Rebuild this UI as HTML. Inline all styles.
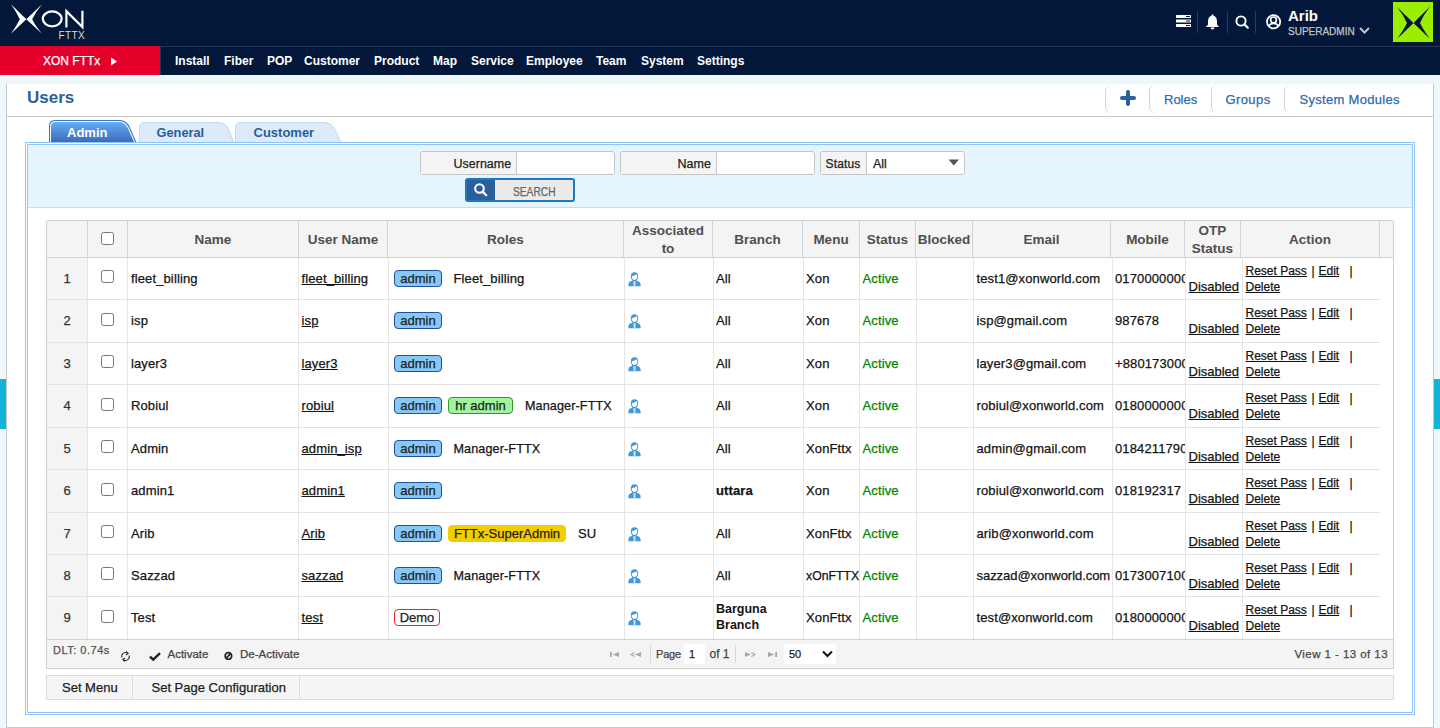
<!DOCTYPE html><html><head><meta charset="utf-8"><style>
html,body{margin:0;padding:0;}
body{width:1440px;height:728px;overflow:hidden;position:relative;background:#eef7f9;font-family:"Liberation Sans", sans-serif;}
.a{position:absolute;box-sizing:border-box;}
.t{position:absolute;white-space:nowrap;font-family:"Liberation Sans", sans-serif;}
.u{text-decoration:underline;}
svg{position:absolute;overflow:visible;}
</style></head><body>

<div class="a" style="left:0px;top:0px;width:1440px;height:75px;background:#021739"></div>
<div class="a" style="left:0px;top:46px;width:1440px;height:1px;background:#26364f"></div>
<div class="a" style="left:0px;top:46px;width:160px;height:29px;background:#e4002b"></div>
<div class="a" style="left:160px;top:46px;width:1px;height:29px;background:#26364f"></div>
<svg style="left:0;top:0" width="100" height="46" viewBox="0 0 100 46">
<path d="M11 4.2 L26.3 19.3 L11 33.8 Q16.5 26 19.8 19.3 Q16.5 12 11 4.2 Z" fill="#fff"/>
<path d="M42 4.2 L26.3 19.3 L42 33.8 Q35.5 26 32.2 19.3 Q35.5 12 42 4.2 Z" fill="#fff"/>
<ellipse cx="52.2" cy="18.85" rx="9.4" ry="7.5" fill="none" stroke="#fff" stroke-width="2.3"/>
<path d="M66.4 27.5 V11.2 L82.4 27 V10.8" fill="none" stroke="#fff" stroke-width="2.2" stroke-linejoin="miter"/>
</svg>
<div class="t " style="left:58.5px;top:31.14px;font-size:10px;line-height:10px;font-weight:400;color:#dcdcdc;-webkit-text-stroke:0.25px currentColor;letter-spacing:0.4px;-webkit-text-stroke:0">FTTX</div>
<div class="t " style="left:43px;top:54.84px;font-size:12px;line-height:12px;font-weight:400;color:#fff;-webkit-text-stroke:0.25px currentColor;">XON FTTx</div>
<svg style="left:110px;top:57px" width="8" height="9"><path d="M1 0.5 L7 4.5 L1 8.5 Z" fill="#fff"/></svg>
<div class="t " style="left:175px;top:54.84px;font-size:12px;line-height:12px;font-weight:700;color:#fff;">Install</div>
<div class="t " style="left:224px;top:54.84px;font-size:12px;line-height:12px;font-weight:700;color:#fff;">Fiber</div>
<div class="t " style="left:267px;top:54.84px;font-size:12px;line-height:12px;font-weight:700;color:#fff;">POP</div>
<div class="t " style="left:304px;top:54.84px;font-size:12px;line-height:12px;font-weight:700;color:#fff;">Customer</div>
<div class="t " style="left:374px;top:54.84px;font-size:12px;line-height:12px;font-weight:700;color:#fff;">Product</div>
<div class="t " style="left:433px;top:54.84px;font-size:12px;line-height:12px;font-weight:700;color:#fff;">Map</div>
<div class="t " style="left:471px;top:54.84px;font-size:12px;line-height:12px;font-weight:700;color:#fff;">Service</div>
<div class="t " style="left:526px;top:54.84px;font-size:12px;line-height:12px;font-weight:700;color:#fff;">Employee</div>
<div class="t " style="left:596px;top:54.84px;font-size:12px;line-height:12px;font-weight:700;color:#fff;">Team</div>
<div class="t " style="left:641px;top:54.84px;font-size:12px;line-height:12px;font-weight:700;color:#fff;">System</div>
<div class="t " style="left:697px;top:54.84px;font-size:12px;line-height:12px;font-weight:700;color:#fff;">Settings</div>
<svg style="left:1176px;top:14px" width="16" height="14" viewBox="0 0 16 14">
<rect x="0" y="1" width="15" height="3" rx="0.5" fill="#fff"/><rect x="0" y="5.5" width="15" height="3" rx="0.5" fill="#fff"/><rect x="0" y="10" width="15" height="3" rx="0.5" fill="#fff"/>
<rect x="10" y="2" width="4" height="1" fill="#021739"/><rect x="10" y="6.5" width="4" height="1" fill="#021739"/><rect x="10" y="11" width="4" height="1" fill="#021739"/>
</svg>
<div class="a" style="left:1197px;top:11px;width:1px;height:22px;background:#2c3b55"></div>
<svg style="left:1205px;top:14px" width="15" height="16" viewBox="0 0 15 16">
<path d="M7.5 0.5 C8.3 0.5 8.5 1.2 8.5 1.8 C11 2.5 12 4.5 12 7.5 L12 10.5 L14 13 L1 13 L3 10.5 L3 7.5 C3 4.5 4 2.5 6.5 1.8 C6.5 1.2 6.7 0.5 7.5 0.5 Z" fill="#fff"/>
<path d="M5.5 13.5 A2 2 0 0 0 9.5 13.5 Z" fill="#fff"/>
</svg>
<div class="a" style="left:1227px;top:11px;width:1px;height:22px;background:#2c3b55"></div>
<svg style="left:1234.6px;top:15px" width="15" height="15" viewBox="0 0 15 15">
<circle cx="6" cy="6" r="4.6" fill="none" stroke="#fff" stroke-width="1.9"/>
<path d="M9.3 9.3 L12.8 12.8" stroke="#fff" stroke-width="2.1" stroke-linecap="round"/>
</svg>
<div class="a" style="left:1255px;top:11px;width:1px;height:22px;background:#2c3b55"></div>
<svg style="left:1265px;top:14px" width="17" height="17" viewBox="0 0 17 17">
<circle cx="8.6" cy="7.8" r="6.6" fill="none" stroke="#fff" stroke-width="1.8"/>
<circle cx="8.5" cy="5.9" r="2.9" fill="none" stroke="#fff" stroke-width="1.7"/>
<path d="M4 12.4 C4.6 10.2 6.3 9.3 8.6 9.3 C10.9 9.3 12.6 10.2 13.2 12.4" fill="none" stroke="#fff" stroke-width="1.7"/>
</svg>
<div class="t " style="left:1288px;top:8.30px;font-size:15px;line-height:15px;font-weight:700;color:#fff;">Arib</div>
<div class="t " style="left:1288px;top:26.54px;font-size:10px;line-height:10px;font-weight:400;color:#c4c4c4;-webkit-text-stroke:0.25px currentColor;">SUPERADMIN</div>
<svg style="left:1359px;top:27px" width="11" height="7" viewBox="0 0 11 7"><path d="M1 1 L5.5 5.5 L10 1" fill="none" stroke="#c4c4c4" stroke-width="2"/></svg>
<div class="a" style="left:1393px;top:2px;width:40px;height:40px;background:#9bee00"></div>
<svg style="left:1393px;top:2px" width="40" height="40" viewBox="0 0 40 40">
<path d="M4 5 L20.5 21 L4 37 Q10.5 28 14 21 Q10.5 13 4 5 Z M37 4.5 L20.5 21 L37 37 Q30.5 28 27 21 Q30.5 13 37 4.5 Z" fill="#021739"/>
</svg>
<div class="a" style="left:6px;top:84px;width:1428px;height:644px;background:#fff;border-left:1px solid #c8c8c8;border-right:1px solid #c8c8c8;border-bottom:1px solid #c8c8c8"></div>
<div class="t " style="left:27px;top:88.61px;font-size:17px;line-height:17px;font-weight:700;color:#2c5e99;">Users</div>
<div class="a" style="left:7px;top:116px;width:1426px;height:1px;background:#c8c8c8"></div>
<div class="a" style="left:1105px;top:85px;width:8px;height:28px;border-left:1px solid #d4d4d4;border-radius:6px 0 0 6px"></div>
<div class="a" style="left:1149px;top:85px;width:8px;height:28px;border-left:1px solid #d4d4d4;border-radius:6px 0 0 6px"></div>
<div class="a" style="left:1211px;top:85px;width:8px;height:28px;border-left:1px solid #d4d4d4;border-radius:6px 0 0 6px"></div>
<div class="a" style="left:1284px;top:85px;width:8px;height:28px;border-left:1px solid #d4d4d4;border-radius:6px 0 0 6px"></div>
<svg style="left:1120px;top:90px" width="16" height="16" viewBox="0 0 16 16"><path d="M8 2 V14 M2 8 H14" stroke="#2a5f9e" stroke-width="4" stroke-linecap="round"/></svg>
<div class="t " style="left:1164px;top:93.00px;font-size:13px;line-height:13px;font-weight:400;color:#2f6aa8;-webkit-text-stroke:0.25px currentColor;letter-spacing:0px">Roles</div>
<div class="t " style="left:1225.5px;top:93.00px;font-size:13px;line-height:13px;font-weight:400;color:#2f6aa8;-webkit-text-stroke:0.25px currentColor;letter-spacing:0.4px">Groups</div>
<div class="t " style="left:1299.5px;top:93.00px;font-size:13px;line-height:13px;font-weight:400;color:#2f6aa8;-webkit-text-stroke:0.25px currentColor;letter-spacing:0.3px">System Modules</div>
<svg style="left:0;top:0" width="400" height="150" viewBox="0 0 400 150">
<defs><linearGradient id="tg" x1="0" y1="0" x2="0" y2="1"><stop offset="0" stop-color="#62adf7"/><stop offset="1" stop-color="#3b68b6"/></linearGradient></defs>
<path d="M235.5 143 V128 Q235.5 122.5 241 122.5 H323 Q331.5 122.5 334.5 129 L341.5 143 Z" fill="#dceafa" stroke="#c3d9f2" stroke-width="1"/>
<path d="M139.5 143 V128 Q139.5 122.5 145 122.5 H217 Q225.5 122.5 228.5 129 L234 143 Z" fill="#dceafa" stroke="#c3d9f2" stroke-width="1"/>
<path d="M49 143 V126 Q49 120 55 120 H120 Q126.5 120 129.5 126.5 L136.8 143 Z" fill="#3b76c6"/>
<path d="M50 143 V126.5 Q50 121 55.5 121 H119.5 Q125.5 121 128.5 127 L135.6 143 Z" fill="#f4f9ff"/>
<path d="M51 143 V127 Q51 122 56 122 H119 Q124.5 122 127.5 127.5 L134.4 143 Z" fill="url(#tg)"/>
</svg>
<div class="t " style="left:67px;top:126.00px;font-size:13px;line-height:13px;font-weight:700;color:#fff;">Admin</div>
<div class="t " style="left:156.5px;top:126.66px;font-size:12.8px;line-height:12.8px;font-weight:700;color:#2a5d9a;">General</div>
<div class="t " style="left:253.5px;top:126.00px;font-size:13px;line-height:13px;font-weight:700;color:#2a5d9a;">Customer</div>
<div class="a" style="left:25px;top:142px;width:1390px;height:573px;border:3px double #8fc3f5;background:#fff"></div>
<div class="a" style="left:28px;top:145px;width:1384px;height:62px;background:#e6f5fd"></div>
<div class="a" style="left:28px;top:207px;width:1384px;height:1px;background:#d3dbe0"></div>
<div class="a" style="left:420px;top:151px;width:195px;height:24px;border:1px solid #c6c6c6;border-radius:3px;background:#fff"></div>
<div class="a" style="left:421px;top:152px;width:96px;height:22px;background:#f4f4f4;border-right:1px solid #c6c6c6;border-radius:2px 0 0 2px"></div>
<div class="t " style="left:453.5px;top:158.22px;font-size:12.5px;line-height:12.5px;font-weight:400;color:#222;-webkit-text-stroke:0.25px currentColor;">Username</div>
<div class="a" style="left:620px;top:151px;width:195px;height:24px;border:1px solid #c6c6c6;border-radius:3px;background:#fff"></div>
<div class="a" style="left:621px;top:152px;width:96px;height:22px;background:#f4f4f4;border-right:1px solid #c6c6c6;border-radius:2px 0 0 2px"></div>
<div class="t " style="left:677.5px;top:158.22px;font-size:12.5px;line-height:12.5px;font-weight:400;color:#222;-webkit-text-stroke:0.25px currentColor;">Name</div>
<div class="a" style="left:820px;top:151px;width:145px;height:24px;border:1px solid #c6c6c6;border-radius:3px;background:#fff"></div>
<div class="a" style="left:821px;top:152px;width:46px;height:22px;background:#f4f4f4;border-right:1px solid #c6c6c6;border-radius:2px 0 0 2px"></div>
<div class="t " style="left:825.5px;top:158.14px;font-size:12px;line-height:12px;font-weight:400;color:#222;-webkit-text-stroke:0.25px currentColor;letter-spacing:0.15px">Status</div>
<div class="t " style="left:873px;top:158.22px;font-size:12.5px;line-height:12.5px;font-weight:400;color:#222;-webkit-text-stroke:0.25px currentColor;">All</div>
<svg style="left:948px;top:159px" width="12" height="7"><path d="M0.5 0.5 H11 L5.75 6.5 Z" fill="#555"/></svg>
<div class="a" style="left:465px;top:178px;width:110px;height:24px;border:2px solid #1a7ac4;border-radius:3px;background:#ebebeb"></div>
<div class="a" style="left:467px;top:180px;width:28px;height:20px;background:#2b5f9c"></div>
<svg style="left:473px;top:182px" width="16" height="16" viewBox="0 0 16 16"><circle cx="6.5" cy="6.5" r="4.3" fill="none" stroke="#fff" stroke-width="2"/><path d="M9.6 9.6 L13.2 13.2" stroke="#fff" stroke-width="2.2" stroke-linecap="round"/></svg>
<div class="t " style="left:512.5px;top:185.84px;font-size:12px;line-height:12px;font-weight:400;color:#666;-webkit-text-stroke:0.25px currentColor;transform:scaleX(0.85);transform-origin:0 0">SEARCH</div>
<div class="a" style="left:46px;top:220px;width:1348px;height:449px;border:1px solid #d0d0d0;background:#fff;border-radius:2px 2px 0 0"></div>
<div class="a" style="left:47px;top:221px;width:1346px;height:36px;background:#f4f4f4"></div>
<div class="a" style="left:47px;top:257px;width:1346px;height:1px;background:#d3d3d3"></div>
<div class="a" style="left:87px;top:221px;width:1px;height:36px;background:#d3d3d3"></div>
<div class="a" style="left:127px;top:221px;width:1px;height:36px;background:#d3d3d3"></div>
<div class="a" style="left:298px;top:221px;width:1px;height:36px;background:#d3d3d3"></div>
<div class="a" style="left:387px;top:221px;width:1px;height:36px;background:#d3d3d3"></div>
<div class="a" style="left:623px;top:221px;width:1px;height:36px;background:#d3d3d3"></div>
<div class="a" style="left:712px;top:221px;width:1px;height:36px;background:#d3d3d3"></div>
<div class="a" style="left:802px;top:221px;width:1px;height:36px;background:#d3d3d3"></div>
<div class="a" style="left:859px;top:221px;width:1px;height:36px;background:#d3d3d3"></div>
<div class="a" style="left:915px;top:221px;width:1px;height:36px;background:#d3d3d3"></div>
<div class="a" style="left:972px;top:221px;width:1px;height:36px;background:#d3d3d3"></div>
<div class="a" style="left:1110px;top:221px;width:1px;height:36px;background:#d3d3d3"></div>
<div class="a" style="left:1184px;top:221px;width:1px;height:36px;background:#d3d3d3"></div>
<div class="a" style="left:1240px;top:221px;width:1px;height:36px;background:#d3d3d3"></div>
<div class="a" style="left:1379px;top:221px;width:1px;height:36px;background:#d3d3d3"></div>
<div class="a" style="left:47px;top:258px;width:40px;height:381px;background:#f4f4f4"></div>
<div class="a" style="left:87px;top:258px;width:1px;height:381px;background:#e6e6e6"></div>
<div class="a" style="left:127px;top:258px;width:1px;height:381px;background:#e6e6e6"></div>
<div class="a" style="left:298px;top:258px;width:1px;height:381px;background:#e6e6e6"></div>
<div class="a" style="left:388px;top:258px;width:1px;height:381px;background:#e6e6e6"></div>
<div class="a" style="left:624px;top:258px;width:1px;height:381px;background:#e6e6e6"></div>
<div class="a" style="left:713px;top:258px;width:1px;height:381px;background:#e6e6e6"></div>
<div class="a" style="left:803px;top:258px;width:1px;height:381px;background:#e6e6e6"></div>
<div class="a" style="left:859px;top:258px;width:1px;height:381px;background:#e6e6e6"></div>
<div class="a" style="left:916px;top:258px;width:1px;height:381px;background:#e6e6e6"></div>
<div class="a" style="left:973px;top:258px;width:1px;height:381px;background:#e6e6e6"></div>
<div class="a" style="left:1112px;top:258px;width:1px;height:381px;background:#e6e6e6"></div>
<div class="a" style="left:1185px;top:258px;width:1px;height:381px;background:#e6e6e6"></div>
<div class="a" style="left:1242px;top:258px;width:1px;height:381px;background:#e6e6e6"></div>
<div class="a" style="left:47px;top:299px;width:1333px;height:1px;background:#e2e2e2"></div>
<div class="a" style="left:47px;top:342px;width:1333px;height:1px;background:#e2e2e2"></div>
<div class="a" style="left:47px;top:384px;width:1333px;height:1px;background:#e2e2e2"></div>
<div class="a" style="left:47px;top:427px;width:1333px;height:1px;background:#e2e2e2"></div>
<div class="a" style="left:47px;top:469px;width:1333px;height:1px;background:#e2e2e2"></div>
<div class="a" style="left:47px;top:512px;width:1333px;height:1px;background:#e2e2e2"></div>
<div class="a" style="left:47px;top:554px;width:1333px;height:1px;background:#e2e2e2"></div>
<div class="a" style="left:47px;top:596px;width:1333px;height:1px;background:#e2e2e2"></div>
<div class="a" style="left:47px;top:639px;width:1346px;height:1px;background:#d3d3d3"></div>
<div class="a" style="left:47px;top:640px;width:1346px;height:28px;background:#f4f4f4"></div>
<div class="t" style="left:-87.0px;width:600px;text-align:center;top:232.57px;font-size:13.5px;line-height:13.5px;font-weight:700;color:#4f4f4f;">Name</div>
<div class="t" style="left:43.0px;width:600px;text-align:center;top:232.57px;font-size:13.5px;line-height:13.5px;font-weight:700;color:#4f4f4f;">User Name</div>
<div class="t" style="left:205.5px;width:600px;text-align:center;top:232.57px;font-size:13.5px;line-height:13.5px;font-weight:700;color:#4f4f4f;">Roles</div>
<div class="t" style="left:457.5px;width:600px;text-align:center;top:232.57px;font-size:13.5px;line-height:13.5px;font-weight:700;color:#4f4f4f;">Branch</div>
<div class="t" style="left:531.0px;width:600px;text-align:center;top:232.57px;font-size:13.5px;line-height:13.5px;font-weight:700;color:#4f4f4f;">Menu</div>
<div class="t" style="left:587.5px;width:600px;text-align:center;top:232.57px;font-size:13.5px;line-height:13.5px;font-weight:700;color:#4f4f4f;">Status</div>
<div class="t" style="left:644.0px;width:600px;text-align:center;top:232.57px;font-size:13.5px;line-height:13.5px;font-weight:700;color:#4f4f4f;">Blocked</div>
<div class="t" style="left:741.5px;width:600px;text-align:center;top:232.57px;font-size:13.5px;line-height:13.5px;font-weight:700;color:#4f4f4f;">Email</div>
<div class="t" style="left:847.5px;width:600px;text-align:center;top:232.57px;font-size:13.5px;line-height:13.5px;font-weight:700;color:#4f4f4f;">Mobile</div>
<div class="t" style="left:1010.0px;width:600px;text-align:center;top:232.57px;font-size:13.5px;line-height:13.5px;font-weight:700;color:#4f4f4f;">Action</div>
<div class="t" style="left:368.0px;width:600px;text-align:center;top:223.57px;font-size:13.5px;line-height:13.5px;font-weight:700;color:#4f4f4f;">Associated</div>
<div class="t" style="left:368.0px;width:600px;text-align:center;top:241.57px;font-size:13.5px;line-height:13.5px;font-weight:700;color:#4f4f4f;">to</div>
<div class="t" style="left:912.5px;width:600px;text-align:center;top:223.57px;font-size:13.5px;line-height:13.5px;font-weight:700;color:#4f4f4f;">OTP</div>
<div class="t" style="left:912.5px;width:600px;text-align:center;top:241.57px;font-size:13.5px;line-height:13.5px;font-weight:700;color:#4f4f4f;">Status</div>
<div class="a" style="left:101px;top:232px;width:13px;height:13px;border:1px solid #767676;border-radius:2.5px;background:#fff"></div>
<div class="t" style="left:-233px;width:600px;text-align:center;top:272.00px;font-size:13px;line-height:13px;font-weight:400;color:#333;-webkit-text-stroke:0.25px currentColor;">1</div>
<div class="a" style="left:101px;top:270px;width:13px;height:13px;border:1px solid #767676;border-radius:2.5px;background:#fff"></div>
<div class="t " style="left:131px;top:272.00px;font-size:13px;line-height:13px;font-weight:400;color:#141414;-webkit-text-stroke:0.25px currentColor;letter-spacing:0.12px">fleet_billing</div>
<div class="t u" style="left:301.5px;top:272.00px;font-size:13px;line-height:13px;font-weight:400;color:#141414;-webkit-text-stroke:0.25px currentColor;letter-spacing:0.12px">fleet_billing</div>
<div class="a" style="left:394px;top:270px;width:48px;height:17px;background:#86c9f7;border:1px solid #24509a;border-radius:4px"></div>
<div class="t" style="left:118.0px;width:600px;text-align:center;top:272.00px;font-size:13px;line-height:13px;font-weight:400;color:#222;-webkit-text-stroke:0.25px currentColor;">admin</div>
<div class="t " style="left:453.5px;top:272.00px;font-size:13px;line-height:13px;font-weight:400;color:#141414;-webkit-text-stroke:0.25px currentColor;letter-spacing:0.12px">Fleet_billing</div>
<svg style="left:627.5px;top:272px" width="13" height="15" viewBox="0 0 13 15">
<path d="M6.5 0.3 C9.3 0.3 10.3 2.2 10.2 4.6 C10.2 6.4 9.5 7.6 8.6 8.4 L8.6 8.8 C11 9.3 12.6 10.6 12.6 12.4 L12.6 14.3 L0.4 14.3 L0.4 12.4 C0.4 10.6 2 9.3 4.4 8.8 L4.4 8.4 C3.5 7.6 2.8 6.4 2.8 4.6 C2.7 2.2 3.7 0.3 6.5 0.3 Z" fill="#4298d9"/>
<path d="M4 4.3 C5.5 3.8 7.5 3.2 8.6 2.3 C9 3 9.3 3.8 9.3 4.6 C9.3 6.6 8 8 6.5 8 C5 8 3.7 6.6 3.7 4.6 Z" fill="#fff"/>
<path d="M5.4 9.2 L7.6 9.2 L7.3 14.3 L5.7 14.3 Z" fill="#cfe6f7"/>
</svg>
<div class="t " style="left:716px;top:272.00px;font-size:13px;line-height:13px;font-weight:400;color:#141414;-webkit-text-stroke:0.25px currentColor;letter-spacing:0.12px">All</div>
<div class="t " style="left:806px;top:272.00px;font-size:13px;line-height:13px;font-weight:400;color:#141414;-webkit-text-stroke:0.25px currentColor;letter-spacing:0.12px">Xon</div>
<div class="t " style="left:862.5px;top:272.00px;font-size:13px;line-height:13px;font-weight:400;color:#008500;-webkit-text-stroke:0.25px currentColor;letter-spacing:0.12px">Active</div>
<div class="t " style="left:976.5px;top:272.00px;font-size:13px;line-height:13px;font-weight:400;color:#141414;-webkit-text-stroke:0.25px currentColor;letter-spacing:0.12px">test1@xonworld.com</div>
<div class="a" style="left:1115px;top:258px;width:70px;height:41px;overflow:hidden"><div class="t" style="left:0;top:14.00px;font-size:13px;line-height:13px;color:#141414;letter-spacing:0.12px;-webkit-text-stroke:0.25px currentColor">01700000000</div></div>
<div class="t u" style="left:1188.5px;top:279.70px;font-size:13px;line-height:13px;font-weight:400;color:#141414;-webkit-text-stroke:0.25px currentColor;">Disabled</div>
<div class="t u" style="left:1245.5px;top:264.84px;font-size:12px;line-height:12px;font-weight:400;color:#141414;-webkit-text-stroke:0.25px currentColor;">Reset Pass</div>
<div class="t " style="left:1311.5px;top:264.84px;font-size:12px;line-height:12px;font-weight:400;color:#141414;-webkit-text-stroke:0.25px currentColor;">|</div>
<div class="t u" style="left:1318.5px;top:264.84px;font-size:12px;line-height:12px;font-weight:400;color:#141414;-webkit-text-stroke:0.25px currentColor;">Edit</div>
<div class="t " style="left:1349.5px;top:264.84px;font-size:12px;line-height:12px;font-weight:400;color:#141414;-webkit-text-stroke:0.25px currentColor;">|</div>
<div class="t u" style="left:1245.5px;top:280.54px;font-size:12px;line-height:12px;font-weight:400;color:#141414;-webkit-text-stroke:0.25px currentColor;">Delete</div>
<div class="t" style="left:-233px;width:600px;text-align:center;top:314.00px;font-size:13px;line-height:13px;font-weight:400;color:#333;-webkit-text-stroke:0.25px currentColor;">2</div>
<div class="a" style="left:101px;top:313px;width:13px;height:13px;border:1px solid #767676;border-radius:2.5px;background:#fff"></div>
<div class="t " style="left:131px;top:314.00px;font-size:13px;line-height:13px;font-weight:400;color:#141414;-webkit-text-stroke:0.25px currentColor;letter-spacing:0.12px">isp</div>
<div class="t u" style="left:301.5px;top:314.00px;font-size:13px;line-height:13px;font-weight:400;color:#141414;-webkit-text-stroke:0.25px currentColor;letter-spacing:0.12px">isp</div>
<div class="a" style="left:394px;top:312px;width:48px;height:17px;background:#86c9f7;border:1px solid #24509a;border-radius:4px"></div>
<div class="t" style="left:118.0px;width:600px;text-align:center;top:314.00px;font-size:13px;line-height:13px;font-weight:400;color:#222;-webkit-text-stroke:0.25px currentColor;">admin</div>
<svg style="left:627.5px;top:314px" width="13" height="15" viewBox="0 0 13 15">
<path d="M6.5 0.3 C9.3 0.3 10.3 2.2 10.2 4.6 C10.2 6.4 9.5 7.6 8.6 8.4 L8.6 8.8 C11 9.3 12.6 10.6 12.6 12.4 L12.6 14.3 L0.4 14.3 L0.4 12.4 C0.4 10.6 2 9.3 4.4 8.8 L4.4 8.4 C3.5 7.6 2.8 6.4 2.8 4.6 C2.7 2.2 3.7 0.3 6.5 0.3 Z" fill="#4298d9"/>
<path d="M4 4.3 C5.5 3.8 7.5 3.2 8.6 2.3 C9 3 9.3 3.8 9.3 4.6 C9.3 6.6 8 8 6.5 8 C5 8 3.7 6.6 3.7 4.6 Z" fill="#fff"/>
<path d="M5.4 9.2 L7.6 9.2 L7.3 14.3 L5.7 14.3 Z" fill="#cfe6f7"/>
</svg>
<div class="t " style="left:716px;top:314.00px;font-size:13px;line-height:13px;font-weight:400;color:#141414;-webkit-text-stroke:0.25px currentColor;letter-spacing:0.12px">All</div>
<div class="t " style="left:806px;top:314.00px;font-size:13px;line-height:13px;font-weight:400;color:#141414;-webkit-text-stroke:0.25px currentColor;letter-spacing:0.12px">Xon</div>
<div class="t " style="left:862.5px;top:314.00px;font-size:13px;line-height:13px;font-weight:400;color:#008500;-webkit-text-stroke:0.25px currentColor;letter-spacing:0.12px">Active</div>
<div class="t " style="left:976.5px;top:314.00px;font-size:13px;line-height:13px;font-weight:400;color:#141414;-webkit-text-stroke:0.25px currentColor;letter-spacing:0.12px">isp@gmail.com</div>
<div class="a" style="left:1115px;top:300px;width:70px;height:42px;overflow:hidden"><div class="t" style="left:0;top:14.00px;font-size:13px;line-height:13px;color:#141414;letter-spacing:0.12px;-webkit-text-stroke:0.25px currentColor">987678</div></div>
<div class="t u" style="left:1188.5px;top:321.70px;font-size:13px;line-height:13px;font-weight:400;color:#141414;-webkit-text-stroke:0.25px currentColor;">Disabled</div>
<div class="t u" style="left:1245.5px;top:306.84px;font-size:12px;line-height:12px;font-weight:400;color:#141414;-webkit-text-stroke:0.25px currentColor;">Reset Pass</div>
<div class="t " style="left:1311.5px;top:306.84px;font-size:12px;line-height:12px;font-weight:400;color:#141414;-webkit-text-stroke:0.25px currentColor;">|</div>
<div class="t u" style="left:1318.5px;top:306.84px;font-size:12px;line-height:12px;font-weight:400;color:#141414;-webkit-text-stroke:0.25px currentColor;">Edit</div>
<div class="t " style="left:1349.5px;top:306.84px;font-size:12px;line-height:12px;font-weight:400;color:#141414;-webkit-text-stroke:0.25px currentColor;">|</div>
<div class="t u" style="left:1245.5px;top:322.54px;font-size:12px;line-height:12px;font-weight:400;color:#141414;-webkit-text-stroke:0.25px currentColor;">Delete</div>
<div class="t" style="left:-233px;width:600px;text-align:center;top:357.00px;font-size:13px;line-height:13px;font-weight:400;color:#333;-webkit-text-stroke:0.25px currentColor;">3</div>
<div class="a" style="left:101px;top:355px;width:13px;height:13px;border:1px solid #767676;border-radius:2.5px;background:#fff"></div>
<div class="t " style="left:131px;top:357.00px;font-size:13px;line-height:13px;font-weight:400;color:#141414;-webkit-text-stroke:0.25px currentColor;letter-spacing:0.12px">layer3</div>
<div class="t u" style="left:301.5px;top:357.00px;font-size:13px;line-height:13px;font-weight:400;color:#141414;-webkit-text-stroke:0.25px currentColor;letter-spacing:0.12px">layer3</div>
<div class="a" style="left:394px;top:355px;width:48px;height:17px;background:#86c9f7;border:1px solid #24509a;border-radius:4px"></div>
<div class="t" style="left:118.0px;width:600px;text-align:center;top:357.00px;font-size:13px;line-height:13px;font-weight:400;color:#222;-webkit-text-stroke:0.25px currentColor;">admin</div>
<svg style="left:627.5px;top:357px" width="13" height="15" viewBox="0 0 13 15">
<path d="M6.5 0.3 C9.3 0.3 10.3 2.2 10.2 4.6 C10.2 6.4 9.5 7.6 8.6 8.4 L8.6 8.8 C11 9.3 12.6 10.6 12.6 12.4 L12.6 14.3 L0.4 14.3 L0.4 12.4 C0.4 10.6 2 9.3 4.4 8.8 L4.4 8.4 C3.5 7.6 2.8 6.4 2.8 4.6 C2.7 2.2 3.7 0.3 6.5 0.3 Z" fill="#4298d9"/>
<path d="M4 4.3 C5.5 3.8 7.5 3.2 8.6 2.3 C9 3 9.3 3.8 9.3 4.6 C9.3 6.6 8 8 6.5 8 C5 8 3.7 6.6 3.7 4.6 Z" fill="#fff"/>
<path d="M5.4 9.2 L7.6 9.2 L7.3 14.3 L5.7 14.3 Z" fill="#cfe6f7"/>
</svg>
<div class="t " style="left:716px;top:357.00px;font-size:13px;line-height:13px;font-weight:400;color:#141414;-webkit-text-stroke:0.25px currentColor;letter-spacing:0.12px">All</div>
<div class="t " style="left:806px;top:357.00px;font-size:13px;line-height:13px;font-weight:400;color:#141414;-webkit-text-stroke:0.25px currentColor;letter-spacing:0.12px">Xon</div>
<div class="t " style="left:862.5px;top:357.00px;font-size:13px;line-height:13px;font-weight:400;color:#008500;-webkit-text-stroke:0.25px currentColor;letter-spacing:0.12px">Active</div>
<div class="t " style="left:976.5px;top:357.00px;font-size:13px;line-height:13px;font-weight:400;color:#141414;-webkit-text-stroke:0.25px currentColor;letter-spacing:0.12px">layer3@gmail.com</div>
<div class="a" style="left:1115px;top:343px;width:70px;height:41px;overflow:hidden"><div class="t" style="left:0;top:14.00px;font-size:13px;line-height:13px;color:#141414;letter-spacing:0.12px;-webkit-text-stroke:0.25px currentColor">+8801730000</div></div>
<div class="t u" style="left:1188.5px;top:364.70px;font-size:13px;line-height:13px;font-weight:400;color:#141414;-webkit-text-stroke:0.25px currentColor;">Disabled</div>
<div class="t u" style="left:1245.5px;top:349.84px;font-size:12px;line-height:12px;font-weight:400;color:#141414;-webkit-text-stroke:0.25px currentColor;">Reset Pass</div>
<div class="t " style="left:1311.5px;top:349.84px;font-size:12px;line-height:12px;font-weight:400;color:#141414;-webkit-text-stroke:0.25px currentColor;">|</div>
<div class="t u" style="left:1318.5px;top:349.84px;font-size:12px;line-height:12px;font-weight:400;color:#141414;-webkit-text-stroke:0.25px currentColor;">Edit</div>
<div class="t " style="left:1349.5px;top:349.84px;font-size:12px;line-height:12px;font-weight:400;color:#141414;-webkit-text-stroke:0.25px currentColor;">|</div>
<div class="t u" style="left:1245.5px;top:365.54px;font-size:12px;line-height:12px;font-weight:400;color:#141414;-webkit-text-stroke:0.25px currentColor;">Delete</div>
<div class="t" style="left:-233px;width:600px;text-align:center;top:399.00px;font-size:13px;line-height:13px;font-weight:400;color:#333;-webkit-text-stroke:0.25px currentColor;">4</div>
<div class="a" style="left:101px;top:398px;width:13px;height:13px;border:1px solid #767676;border-radius:2.5px;background:#fff"></div>
<div class="t " style="left:131px;top:399.00px;font-size:13px;line-height:13px;font-weight:400;color:#141414;-webkit-text-stroke:0.25px currentColor;letter-spacing:0.12px">Robiul</div>
<div class="t u" style="left:301.5px;top:399.00px;font-size:13px;line-height:13px;font-weight:400;color:#141414;-webkit-text-stroke:0.25px currentColor;letter-spacing:0.12px">robiul</div>
<div class="a" style="left:394px;top:397px;width:48px;height:17px;background:#86c9f7;border:1px solid #24509a;border-radius:4px"></div>
<div class="t" style="left:118.0px;width:600px;text-align:center;top:399.00px;font-size:13px;line-height:13px;font-weight:400;color:#222;-webkit-text-stroke:0.25px currentColor;">admin</div>
<div class="a" style="left:448px;top:397px;width:65px;height:17px;background:#9ef59e;border:1px solid #2e9a2e;border-radius:4px"></div>
<div class="t" style="left:180.5px;width:600px;text-align:center;top:399.00px;font-size:13px;line-height:13px;font-weight:400;color:#222;-webkit-text-stroke:0.25px currentColor;">hr admin</div>
<div class="t " style="left:525px;top:400.03px;font-size:12.6px;line-height:12.6px;font-weight:400;color:#141414;-webkit-text-stroke:0.25px currentColor;letter-spacing:0.12px">Manager-FTTX</div>
<svg style="left:627.5px;top:399px" width="13" height="15" viewBox="0 0 13 15">
<path d="M6.5 0.3 C9.3 0.3 10.3 2.2 10.2 4.6 C10.2 6.4 9.5 7.6 8.6 8.4 L8.6 8.8 C11 9.3 12.6 10.6 12.6 12.4 L12.6 14.3 L0.4 14.3 L0.4 12.4 C0.4 10.6 2 9.3 4.4 8.8 L4.4 8.4 C3.5 7.6 2.8 6.4 2.8 4.6 C2.7 2.2 3.7 0.3 6.5 0.3 Z" fill="#4298d9"/>
<path d="M4 4.3 C5.5 3.8 7.5 3.2 8.6 2.3 C9 3 9.3 3.8 9.3 4.6 C9.3 6.6 8 8 6.5 8 C5 8 3.7 6.6 3.7 4.6 Z" fill="#fff"/>
<path d="M5.4 9.2 L7.6 9.2 L7.3 14.3 L5.7 14.3 Z" fill="#cfe6f7"/>
</svg>
<div class="t " style="left:716px;top:399.00px;font-size:13px;line-height:13px;font-weight:400;color:#141414;-webkit-text-stroke:0.25px currentColor;letter-spacing:0.12px">All</div>
<div class="t " style="left:806px;top:399.00px;font-size:13px;line-height:13px;font-weight:400;color:#141414;-webkit-text-stroke:0.25px currentColor;letter-spacing:0.12px">Xon</div>
<div class="t " style="left:862.5px;top:399.00px;font-size:13px;line-height:13px;font-weight:400;color:#008500;-webkit-text-stroke:0.25px currentColor;letter-spacing:0.12px">Active</div>
<div class="t " style="left:976.5px;top:399.00px;font-size:13px;line-height:13px;font-weight:400;color:#141414;-webkit-text-stroke:0.25px currentColor;letter-spacing:0.12px">robiul@xonworld.com</div>
<div class="a" style="left:1115px;top:385px;width:70px;height:42px;overflow:hidden"><div class="t" style="left:0;top:14.00px;font-size:13px;line-height:13px;color:#141414;letter-spacing:0.12px;-webkit-text-stroke:0.25px currentColor">01800000000</div></div>
<div class="t u" style="left:1188.5px;top:406.70px;font-size:13px;line-height:13px;font-weight:400;color:#141414;-webkit-text-stroke:0.25px currentColor;">Disabled</div>
<div class="t u" style="left:1245.5px;top:391.84px;font-size:12px;line-height:12px;font-weight:400;color:#141414;-webkit-text-stroke:0.25px currentColor;">Reset Pass</div>
<div class="t " style="left:1311.5px;top:391.84px;font-size:12px;line-height:12px;font-weight:400;color:#141414;-webkit-text-stroke:0.25px currentColor;">|</div>
<div class="t u" style="left:1318.5px;top:391.84px;font-size:12px;line-height:12px;font-weight:400;color:#141414;-webkit-text-stroke:0.25px currentColor;">Edit</div>
<div class="t " style="left:1349.5px;top:391.84px;font-size:12px;line-height:12px;font-weight:400;color:#141414;-webkit-text-stroke:0.25px currentColor;">|</div>
<div class="t u" style="left:1245.5px;top:407.54px;font-size:12px;line-height:12px;font-weight:400;color:#141414;-webkit-text-stroke:0.25px currentColor;">Delete</div>
<div class="t" style="left:-233px;width:600px;text-align:center;top:442.00px;font-size:13px;line-height:13px;font-weight:400;color:#333;-webkit-text-stroke:0.25px currentColor;">5</div>
<div class="a" style="left:101px;top:440px;width:13px;height:13px;border:1px solid #767676;border-radius:2.5px;background:#fff"></div>
<div class="t " style="left:131px;top:442.00px;font-size:13px;line-height:13px;font-weight:400;color:#141414;-webkit-text-stroke:0.25px currentColor;letter-spacing:0.12px">Admin</div>
<div class="t u" style="left:301.5px;top:442.00px;font-size:13px;line-height:13px;font-weight:400;color:#141414;-webkit-text-stroke:0.25px currentColor;letter-spacing:0.12px">admin_isp</div>
<div class="a" style="left:394px;top:440px;width:48px;height:17px;background:#86c9f7;border:1px solid #24509a;border-radius:4px"></div>
<div class="t" style="left:118.0px;width:600px;text-align:center;top:442.00px;font-size:13px;line-height:13px;font-weight:400;color:#222;-webkit-text-stroke:0.25px currentColor;">admin</div>
<div class="t " style="left:453.5px;top:443.03px;font-size:12.6px;line-height:12.6px;font-weight:400;color:#141414;-webkit-text-stroke:0.25px currentColor;letter-spacing:0.12px">Manager-FTTX</div>
<svg style="left:627.5px;top:442px" width="13" height="15" viewBox="0 0 13 15">
<path d="M6.5 0.3 C9.3 0.3 10.3 2.2 10.2 4.6 C10.2 6.4 9.5 7.6 8.6 8.4 L8.6 8.8 C11 9.3 12.6 10.6 12.6 12.4 L12.6 14.3 L0.4 14.3 L0.4 12.4 C0.4 10.6 2 9.3 4.4 8.8 L4.4 8.4 C3.5 7.6 2.8 6.4 2.8 4.6 C2.7 2.2 3.7 0.3 6.5 0.3 Z" fill="#4298d9"/>
<path d="M4 4.3 C5.5 3.8 7.5 3.2 8.6 2.3 C9 3 9.3 3.8 9.3 4.6 C9.3 6.6 8 8 6.5 8 C5 8 3.7 6.6 3.7 4.6 Z" fill="#fff"/>
<path d="M5.4 9.2 L7.6 9.2 L7.3 14.3 L5.7 14.3 Z" fill="#cfe6f7"/>
</svg>
<div class="t " style="left:716px;top:442.00px;font-size:13px;line-height:13px;font-weight:400;color:#141414;-webkit-text-stroke:0.25px currentColor;letter-spacing:0.12px">All</div>
<div class="t " style="left:806px;top:442.00px;font-size:13px;line-height:13px;font-weight:400;color:#141414;-webkit-text-stroke:0.25px currentColor;letter-spacing:0.12px">XonFttx</div>
<div class="t " style="left:862.5px;top:442.00px;font-size:13px;line-height:13px;font-weight:400;color:#008500;-webkit-text-stroke:0.25px currentColor;letter-spacing:0.12px">Active</div>
<div class="t " style="left:976.5px;top:442.00px;font-size:13px;line-height:13px;font-weight:400;color:#141414;-webkit-text-stroke:0.25px currentColor;letter-spacing:0.12px">admin@gmail.com</div>
<div class="a" style="left:1115px;top:428px;width:70px;height:41px;overflow:hidden"><div class="t" style="left:0;top:14.00px;font-size:13px;line-height:13px;color:#141414;letter-spacing:0.12px;-webkit-text-stroke:0.25px currentColor">01842117900</div></div>
<div class="t u" style="left:1188.5px;top:449.70px;font-size:13px;line-height:13px;font-weight:400;color:#141414;-webkit-text-stroke:0.25px currentColor;">Disabled</div>
<div class="t u" style="left:1245.5px;top:434.84px;font-size:12px;line-height:12px;font-weight:400;color:#141414;-webkit-text-stroke:0.25px currentColor;">Reset Pass</div>
<div class="t " style="left:1311.5px;top:434.84px;font-size:12px;line-height:12px;font-weight:400;color:#141414;-webkit-text-stroke:0.25px currentColor;">|</div>
<div class="t u" style="left:1318.5px;top:434.84px;font-size:12px;line-height:12px;font-weight:400;color:#141414;-webkit-text-stroke:0.25px currentColor;">Edit</div>
<div class="t " style="left:1349.5px;top:434.84px;font-size:12px;line-height:12px;font-weight:400;color:#141414;-webkit-text-stroke:0.25px currentColor;">|</div>
<div class="t u" style="left:1245.5px;top:450.54px;font-size:12px;line-height:12px;font-weight:400;color:#141414;-webkit-text-stroke:0.25px currentColor;">Delete</div>
<div class="t" style="left:-233px;width:600px;text-align:center;top:484.00px;font-size:13px;line-height:13px;font-weight:400;color:#333;-webkit-text-stroke:0.25px currentColor;">6</div>
<div class="a" style="left:101px;top:483px;width:13px;height:13px;border:1px solid #767676;border-radius:2.5px;background:#fff"></div>
<div class="t " style="left:131px;top:484.00px;font-size:13px;line-height:13px;font-weight:400;color:#141414;-webkit-text-stroke:0.25px currentColor;letter-spacing:0.12px">admin1</div>
<div class="t u" style="left:301.5px;top:484.00px;font-size:13px;line-height:13px;font-weight:400;color:#141414;-webkit-text-stroke:0.25px currentColor;letter-spacing:0.12px">admin1</div>
<div class="a" style="left:394px;top:482px;width:48px;height:17px;background:#86c9f7;border:1px solid #24509a;border-radius:4px"></div>
<div class="t" style="left:118.0px;width:600px;text-align:center;top:484.00px;font-size:13px;line-height:13px;font-weight:400;color:#222;-webkit-text-stroke:0.25px currentColor;">admin</div>
<svg style="left:627.5px;top:484px" width="13" height="15" viewBox="0 0 13 15">
<path d="M6.5 0.3 C9.3 0.3 10.3 2.2 10.2 4.6 C10.2 6.4 9.5 7.6 8.6 8.4 L8.6 8.8 C11 9.3 12.6 10.6 12.6 12.4 L12.6 14.3 L0.4 14.3 L0.4 12.4 C0.4 10.6 2 9.3 4.4 8.8 L4.4 8.4 C3.5 7.6 2.8 6.4 2.8 4.6 C2.7 2.2 3.7 0.3 6.5 0.3 Z" fill="#4298d9"/>
<path d="M4 4.3 C5.5 3.8 7.5 3.2 8.6 2.3 C9 3 9.3 3.8 9.3 4.6 C9.3 6.6 8 8 6.5 8 C5 8 3.7 6.6 3.7 4.6 Z" fill="#fff"/>
<path d="M5.4 9.2 L7.6 9.2 L7.3 14.3 L5.7 14.3 Z" fill="#cfe6f7"/>
</svg>
<div class="t " style="left:716px;top:484.00px;font-size:13px;line-height:13px;font-weight:400;color:#141414;-webkit-text-stroke:0.25px currentColor;letter-spacing:0.12px"><b>uttara</b></div>
<div class="t " style="left:806px;top:484.00px;font-size:13px;line-height:13px;font-weight:400;color:#141414;-webkit-text-stroke:0.25px currentColor;letter-spacing:0.12px">Xon</div>
<div class="t " style="left:862.5px;top:484.00px;font-size:13px;line-height:13px;font-weight:400;color:#008500;-webkit-text-stroke:0.25px currentColor;letter-spacing:0.12px">Active</div>
<div class="t " style="left:976.5px;top:484.00px;font-size:13px;line-height:13px;font-weight:400;color:#141414;-webkit-text-stroke:0.25px currentColor;letter-spacing:0.12px">robiul@xonworld.com</div>
<div class="a" style="left:1115px;top:470px;width:70px;height:42px;overflow:hidden"><div class="t" style="left:0;top:14.00px;font-size:13px;line-height:13px;color:#141414;letter-spacing:0.12px;-webkit-text-stroke:0.25px currentColor">018192317</div></div>
<div class="t u" style="left:1188.5px;top:491.70px;font-size:13px;line-height:13px;font-weight:400;color:#141414;-webkit-text-stroke:0.25px currentColor;">Disabled</div>
<div class="t u" style="left:1245.5px;top:476.84px;font-size:12px;line-height:12px;font-weight:400;color:#141414;-webkit-text-stroke:0.25px currentColor;">Reset Pass</div>
<div class="t " style="left:1311.5px;top:476.84px;font-size:12px;line-height:12px;font-weight:400;color:#141414;-webkit-text-stroke:0.25px currentColor;">|</div>
<div class="t u" style="left:1318.5px;top:476.84px;font-size:12px;line-height:12px;font-weight:400;color:#141414;-webkit-text-stroke:0.25px currentColor;">Edit</div>
<div class="t " style="left:1349.5px;top:476.84px;font-size:12px;line-height:12px;font-weight:400;color:#141414;-webkit-text-stroke:0.25px currentColor;">|</div>
<div class="t u" style="left:1245.5px;top:492.54px;font-size:12px;line-height:12px;font-weight:400;color:#141414;-webkit-text-stroke:0.25px currentColor;">Delete</div>
<div class="t" style="left:-233px;width:600px;text-align:center;top:527.00px;font-size:13px;line-height:13px;font-weight:400;color:#333;-webkit-text-stroke:0.25px currentColor;">7</div>
<div class="a" style="left:101px;top:525px;width:13px;height:13px;border:1px solid #767676;border-radius:2.5px;background:#fff"></div>
<div class="t " style="left:131px;top:527.00px;font-size:13px;line-height:13px;font-weight:400;color:#141414;-webkit-text-stroke:0.25px currentColor;letter-spacing:0.12px">Arib</div>
<div class="t u" style="left:301.5px;top:527.00px;font-size:13px;line-height:13px;font-weight:400;color:#141414;-webkit-text-stroke:0.25px currentColor;letter-spacing:0.12px">Arib</div>
<div class="a" style="left:394px;top:525px;width:48px;height:17px;background:#86c9f7;border:1px solid #24509a;border-radius:4px"></div>
<div class="t" style="left:118.0px;width:600px;text-align:center;top:527.00px;font-size:13px;line-height:13px;font-weight:400;color:#222;-webkit-text-stroke:0.25px currentColor;">admin</div>
<div class="a" style="left:448px;top:525px;width:118px;height:17px;background:#f2cd00;border:1px solid #f2cd00;border-radius:4px"></div>
<div class="t" style="left:207.0px;width:600px;text-align:center;top:527.00px;font-size:13px;line-height:13px;font-weight:400;color:#222;-webkit-text-stroke:0.25px currentColor;">FTTx-SuperAdmin</div>
<div class="t " style="left:578px;top:527.00px;font-size:13px;line-height:13px;font-weight:400;color:#141414;-webkit-text-stroke:0.25px currentColor;letter-spacing:0.12px">SU</div>
<svg style="left:627.5px;top:527px" width="13" height="15" viewBox="0 0 13 15">
<path d="M6.5 0.3 C9.3 0.3 10.3 2.2 10.2 4.6 C10.2 6.4 9.5 7.6 8.6 8.4 L8.6 8.8 C11 9.3 12.6 10.6 12.6 12.4 L12.6 14.3 L0.4 14.3 L0.4 12.4 C0.4 10.6 2 9.3 4.4 8.8 L4.4 8.4 C3.5 7.6 2.8 6.4 2.8 4.6 C2.7 2.2 3.7 0.3 6.5 0.3 Z" fill="#4298d9"/>
<path d="M4 4.3 C5.5 3.8 7.5 3.2 8.6 2.3 C9 3 9.3 3.8 9.3 4.6 C9.3 6.6 8 8 6.5 8 C5 8 3.7 6.6 3.7 4.6 Z" fill="#fff"/>
<path d="M5.4 9.2 L7.6 9.2 L7.3 14.3 L5.7 14.3 Z" fill="#cfe6f7"/>
</svg>
<div class="t " style="left:716px;top:527.00px;font-size:13px;line-height:13px;font-weight:400;color:#141414;-webkit-text-stroke:0.25px currentColor;letter-spacing:0.12px">All</div>
<div class="t " style="left:806px;top:527.00px;font-size:13px;line-height:13px;font-weight:400;color:#141414;-webkit-text-stroke:0.25px currentColor;letter-spacing:0.12px">XonFttx</div>
<div class="t " style="left:862.5px;top:527.00px;font-size:13px;line-height:13px;font-weight:400;color:#008500;-webkit-text-stroke:0.25px currentColor;letter-spacing:0.12px">Active</div>
<div class="t " style="left:976.5px;top:527.00px;font-size:13px;line-height:13px;font-weight:400;color:#141414;-webkit-text-stroke:0.25px currentColor;letter-spacing:0.12px">arib@xonworld.com</div>
<div class="t u" style="left:1188.5px;top:534.70px;font-size:13px;line-height:13px;font-weight:400;color:#141414;-webkit-text-stroke:0.25px currentColor;">Disabled</div>
<div class="t u" style="left:1245.5px;top:519.84px;font-size:12px;line-height:12px;font-weight:400;color:#141414;-webkit-text-stroke:0.25px currentColor;">Reset Pass</div>
<div class="t " style="left:1311.5px;top:519.84px;font-size:12px;line-height:12px;font-weight:400;color:#141414;-webkit-text-stroke:0.25px currentColor;">|</div>
<div class="t u" style="left:1318.5px;top:519.84px;font-size:12px;line-height:12px;font-weight:400;color:#141414;-webkit-text-stroke:0.25px currentColor;">Edit</div>
<div class="t " style="left:1349.5px;top:519.84px;font-size:12px;line-height:12px;font-weight:400;color:#141414;-webkit-text-stroke:0.25px currentColor;">|</div>
<div class="t u" style="left:1245.5px;top:535.54px;font-size:12px;line-height:12px;font-weight:400;color:#141414;-webkit-text-stroke:0.25px currentColor;">Delete</div>
<div class="t" style="left:-233px;width:600px;text-align:center;top:569.00px;font-size:13px;line-height:13px;font-weight:400;color:#333;-webkit-text-stroke:0.25px currentColor;">8</div>
<div class="a" style="left:101px;top:567px;width:13px;height:13px;border:1px solid #767676;border-radius:2.5px;background:#fff"></div>
<div class="t " style="left:131px;top:569.00px;font-size:13px;line-height:13px;font-weight:400;color:#141414;-webkit-text-stroke:0.25px currentColor;letter-spacing:0.12px">Sazzad</div>
<div class="t u" style="left:301.5px;top:569.00px;font-size:13px;line-height:13px;font-weight:400;color:#141414;-webkit-text-stroke:0.25px currentColor;letter-spacing:0.12px">sazzad</div>
<div class="a" style="left:394px;top:567px;width:48px;height:17px;background:#86c9f7;border:1px solid #24509a;border-radius:4px"></div>
<div class="t" style="left:118.0px;width:600px;text-align:center;top:569.00px;font-size:13px;line-height:13px;font-weight:400;color:#222;-webkit-text-stroke:0.25px currentColor;">admin</div>
<div class="t " style="left:453.5px;top:570.03px;font-size:12.6px;line-height:12.6px;font-weight:400;color:#141414;-webkit-text-stroke:0.25px currentColor;letter-spacing:0.12px">Manager-FTTX</div>
<svg style="left:627.5px;top:569px" width="13" height="15" viewBox="0 0 13 15">
<path d="M6.5 0.3 C9.3 0.3 10.3 2.2 10.2 4.6 C10.2 6.4 9.5 7.6 8.6 8.4 L8.6 8.8 C11 9.3 12.6 10.6 12.6 12.4 L12.6 14.3 L0.4 14.3 L0.4 12.4 C0.4 10.6 2 9.3 4.4 8.8 L4.4 8.4 C3.5 7.6 2.8 6.4 2.8 4.6 C2.7 2.2 3.7 0.3 6.5 0.3 Z" fill="#4298d9"/>
<path d="M4 4.3 C5.5 3.8 7.5 3.2 8.6 2.3 C9 3 9.3 3.8 9.3 4.6 C9.3 6.6 8 8 6.5 8 C5 8 3.7 6.6 3.7 4.6 Z" fill="#fff"/>
<path d="M5.4 9.2 L7.6 9.2 L7.3 14.3 L5.7 14.3 Z" fill="#cfe6f7"/>
</svg>
<div class="t " style="left:716px;top:569.00px;font-size:13px;line-height:13px;font-weight:400;color:#141414;-webkit-text-stroke:0.25px currentColor;letter-spacing:0.12px">All</div>
<div class="t " style="left:806px;top:569.59px;font-size:12.3px;line-height:12.3px;font-weight:400;color:#141414;-webkit-text-stroke:0.25px currentColor;">xOnFTTX</div>
<div class="t " style="left:862.5px;top:569.00px;font-size:13px;line-height:13px;font-weight:400;color:#008500;-webkit-text-stroke:0.25px currentColor;letter-spacing:0.12px">Active</div>
<div class="t " style="left:976.5px;top:569.00px;font-size:13px;line-height:13px;font-weight:400;color:#141414;-webkit-text-stroke:0.25px currentColor;letter-spacing:-0.05px">sazzad@xonworld.com</div>
<div class="a" style="left:1115px;top:555px;width:70px;height:41px;overflow:hidden"><div class="t" style="left:0;top:14.00px;font-size:13px;line-height:13px;color:#141414;letter-spacing:0.12px;-webkit-text-stroke:0.25px currentColor">01730071000</div></div>
<div class="t u" style="left:1188.5px;top:576.70px;font-size:13px;line-height:13px;font-weight:400;color:#141414;-webkit-text-stroke:0.25px currentColor;">Disabled</div>
<div class="t u" style="left:1245.5px;top:561.84px;font-size:12px;line-height:12px;font-weight:400;color:#141414;-webkit-text-stroke:0.25px currentColor;">Reset Pass</div>
<div class="t " style="left:1311.5px;top:561.84px;font-size:12px;line-height:12px;font-weight:400;color:#141414;-webkit-text-stroke:0.25px currentColor;">|</div>
<div class="t u" style="left:1318.5px;top:561.84px;font-size:12px;line-height:12px;font-weight:400;color:#141414;-webkit-text-stroke:0.25px currentColor;">Edit</div>
<div class="t " style="left:1349.5px;top:561.84px;font-size:12px;line-height:12px;font-weight:400;color:#141414;-webkit-text-stroke:0.25px currentColor;">|</div>
<div class="t u" style="left:1245.5px;top:577.54px;font-size:12px;line-height:12px;font-weight:400;color:#141414;-webkit-text-stroke:0.25px currentColor;">Delete</div>
<div class="t" style="left:-233px;width:600px;text-align:center;top:611.00px;font-size:13px;line-height:13px;font-weight:400;color:#333;-webkit-text-stroke:0.25px currentColor;">9</div>
<div class="a" style="left:101px;top:610px;width:13px;height:13px;border:1px solid #767676;border-radius:2.5px;background:#fff"></div>
<div class="t " style="left:131px;top:611.00px;font-size:13px;line-height:13px;font-weight:400;color:#141414;-webkit-text-stroke:0.25px currentColor;letter-spacing:0.12px">Test</div>
<div class="t u" style="left:301.5px;top:611.00px;font-size:13px;line-height:13px;font-weight:400;color:#141414;-webkit-text-stroke:0.25px currentColor;letter-spacing:0.12px">test</div>
<div class="a" style="left:394px;top:609px;width:46px;height:17px;background:#fff;border:1px solid #e3262a;border-radius:4px"></div>
<div class="t" style="left:117.0px;width:600px;text-align:center;top:611.00px;font-size:13px;line-height:13px;font-weight:400;color:#222;-webkit-text-stroke:0.25px currentColor;">Demo</div>
<svg style="left:627.5px;top:611px" width="13" height="15" viewBox="0 0 13 15">
<path d="M6.5 0.3 C9.3 0.3 10.3 2.2 10.2 4.6 C10.2 6.4 9.5 7.6 8.6 8.4 L8.6 8.8 C11 9.3 12.6 10.6 12.6 12.4 L12.6 14.3 L0.4 14.3 L0.4 12.4 C0.4 10.6 2 9.3 4.4 8.8 L4.4 8.4 C3.5 7.6 2.8 6.4 2.8 4.6 C2.7 2.2 3.7 0.3 6.5 0.3 Z" fill="#4298d9"/>
<path d="M4 4.3 C5.5 3.8 7.5 3.2 8.6 2.3 C9 3 9.3 3.8 9.3 4.6 C9.3 6.6 8 8 6.5 8 C5 8 3.7 6.6 3.7 4.6 Z" fill="#fff"/>
<path d="M5.4 9.2 L7.6 9.2 L7.3 14.3 L5.7 14.3 Z" fill="#cfe6f7"/>
</svg>
<div class="t " style="left:716px;top:603.42px;font-size:12.5px;line-height:12.5px;font-weight:700;color:#141414;">Barguna</div>
<div class="t " style="left:716px;top:619.42px;font-size:12.5px;line-height:12.5px;font-weight:700;color:#141414;">Branch</div>
<div class="t " style="left:806px;top:611.00px;font-size:13px;line-height:13px;font-weight:400;color:#141414;-webkit-text-stroke:0.25px currentColor;letter-spacing:0.12px">XonFttx</div>
<div class="t " style="left:862.5px;top:611.00px;font-size:13px;line-height:13px;font-weight:400;color:#008500;-webkit-text-stroke:0.25px currentColor;letter-spacing:0.12px">Active</div>
<div class="t " style="left:976.5px;top:611.00px;font-size:13px;line-height:13px;font-weight:400;color:#141414;-webkit-text-stroke:0.25px currentColor;letter-spacing:0.12px">test@xonworld.com</div>
<div class="a" style="left:1115px;top:597px;width:70px;height:42px;overflow:hidden"><div class="t" style="left:0;top:14.00px;font-size:13px;line-height:13px;color:#141414;letter-spacing:0.12px;-webkit-text-stroke:0.25px currentColor">01800000000</div></div>
<div class="t u" style="left:1188.5px;top:618.70px;font-size:13px;line-height:13px;font-weight:400;color:#141414;-webkit-text-stroke:0.25px currentColor;">Disabled</div>
<div class="t u" style="left:1245.5px;top:603.84px;font-size:12px;line-height:12px;font-weight:400;color:#141414;-webkit-text-stroke:0.25px currentColor;">Reset Pass</div>
<div class="t " style="left:1311.5px;top:603.84px;font-size:12px;line-height:12px;font-weight:400;color:#141414;-webkit-text-stroke:0.25px currentColor;">|</div>
<div class="t u" style="left:1318.5px;top:603.84px;font-size:12px;line-height:12px;font-weight:400;color:#141414;-webkit-text-stroke:0.25px currentColor;">Edit</div>
<div class="t " style="left:1349.5px;top:603.84px;font-size:12px;line-height:12px;font-weight:400;color:#141414;-webkit-text-stroke:0.25px currentColor;">|</div>
<div class="t u" style="left:1245.5px;top:619.54px;font-size:12px;line-height:12px;font-weight:400;color:#141414;-webkit-text-stroke:0.25px currentColor;">Delete</div>
<div class="t " style="left:53px;top:644.69px;font-size:11px;line-height:11px;font-weight:400;color:#555;-webkit-text-stroke:0.25px currentColor;letter-spacing:0.5px">DLT: 0.74s</div>
<svg style="left:120px;top:651px" width="11" height="11" viewBox="0 0 11 11"><path d="M2 6.5 A3.6 3.6 0 0 1 7.5 2.3 M9 4.5 A3.6 3.6 0 0 1 3.5 8.7" fill="none" stroke="#333" stroke-width="1.1"/><path d="M6.2 0.5 L8.2 2.5 L6 4" fill="none" stroke="#333" stroke-width="1.1"/><path d="M4.8 10.5 L2.8 8.5 L5 7" fill="none" stroke="#333" stroke-width="1.1"/></svg>
<svg style="left:149px;top:652px" width="12" height="9" viewBox="0 0 12 9"><path d="M1 4.6 L4.2 7.6 L11 1.2" fill="none" stroke="#222" stroke-width="2.5"/></svg>
<div class="t " style="left:167.5px;top:649.07px;font-size:11.5px;line-height:11.5px;font-weight:400;color:#444;-webkit-text-stroke:0.25px currentColor;">Activate</div>
<svg style="left:223.5px;top:652px" width="9" height="9" viewBox="0 0 9 9"><circle cx="4.4" cy="3.95" r="3.3" fill="none" stroke="#222" stroke-width="1.7"/><path d="M2.2 6.2 L6.6 1.7" stroke="#222" stroke-width="1.7"/></svg>
<div class="t " style="left:240px;top:649.07px;font-size:11.5px;line-height:11.5px;font-weight:400;color:#444;-webkit-text-stroke:0.25px currentColor;">De-Activate</div>
<svg style="left:610px;top:652px" width="10" height="5" viewBox="0 0 10 5"><rect x="0" y="0" width="1.8" height="5" fill="#a8a8a8"/><path d="M9 0 V5 L2.6 2.5 Z" fill="#a8a8a8"/></svg>
<svg style="left:630px;top:652px" width="12" height="5" viewBox="0 0 12 5"><path d="M4.6 0.4 L1 2.5 L4.6 4.6" fill="none" stroke="#a8a8a8" stroke-width="1.2"/><path d="M11 0 V5 L5 2.5 Z" fill="#a8a8a8"/></svg>
<div class="a" style="left:650px;top:645px;width:1px;height:18px;background:#d8d8d8"></div>
<div class="t " style="left:656px;top:649.29px;font-size:11px;line-height:11px;font-weight:400;color:#444;-webkit-text-stroke:0.25px currentColor;letter-spacing:-0.2px">Page</div>
<div class="a" style="left:684px;top:644px;width:21px;height:20px;background:#fff"></div>
<div class="t " style="left:689px;top:649.29px;font-size:11px;line-height:11px;font-weight:400;color:#222;-webkit-text-stroke:0.25px currentColor;">1</div>
<div class="t " style="left:709.5px;top:648.44px;font-size:12px;line-height:12px;font-weight:400;color:#444;-webkit-text-stroke:0.25px currentColor;">of 1</div>
<div class="a" style="left:735px;top:645px;width:1px;height:18px;background:#d8d8d8"></div>
<svg style="left:745px;top:652px" width="12" height="5" viewBox="0 0 12 5"><path d="M0 0 V5 L6 2.5 Z" fill="#a8a8a8"/><path d="M6.4 0.4 L10 2.5 L6.4 4.6" fill="none" stroke="#a8a8a8" stroke-width="1.2"/></svg>
<svg style="left:768px;top:652px" width="10" height="5" viewBox="0 0 10 5"><path d="M0 0 V5 L6.4 2.5 Z" fill="#a8a8a8"/><rect x="7.2" y="0" width="1.8" height="5" fill="#a8a8a8"/></svg>
<div class="a" style="left:784px;top:644px;width:52px;height:20px;background:#fff"></div>
<div class="t " style="left:789px;top:649.29px;font-size:11px;line-height:11px;font-weight:400;color:#222;-webkit-text-stroke:0.25px currentColor;">50</div>
<svg style="left:822px;top:650px" width="11" height="8" viewBox="0 0 11 8"><path d="M1 1.5 L5.5 6 L10 1.5" fill="none" stroke="#111" stroke-width="2"/></svg>
<div class="t" style="left:788px;width:600px;text-align:right;top:649.27px;font-size:11.5px;line-height:11.5px;font-weight:400;color:#484848;-webkit-text-stroke:0.25px currentColor;letter-spacing:0.44px">View 1 - 13 of 13</div>
<div class="a" style="left:46px;top:675px;width:1348px;height:25px;background:#f5f5f5;border:1px solid #dcdcdc"></div>
<div class="a" style="left:132px;top:676px;width:1px;height:23px;background:#dcdcdc"></div>
<div class="a" style="left:299px;top:676px;width:1px;height:23px;background:#dcdcdc"></div>
<div class="t " style="left:62px;top:681.00px;font-size:13px;line-height:13px;font-weight:400;color:#222;-webkit-text-stroke:0.25px currentColor;">Set Menu</div>
<div class="t " style="left:151.5px;top:681.00px;font-size:13px;line-height:13px;font-weight:400;color:#222;-webkit-text-stroke:0.25px currentColor;">Set Page Configuration</div>
<div class="a" style="left:0px;top:379px;width:6px;height:50px;background:#0fb4d8"></div>
<div class="a" style="left:1434px;top:379px;width:6px;height:50px;background:#0fb4d8"></div>
</body></html>
